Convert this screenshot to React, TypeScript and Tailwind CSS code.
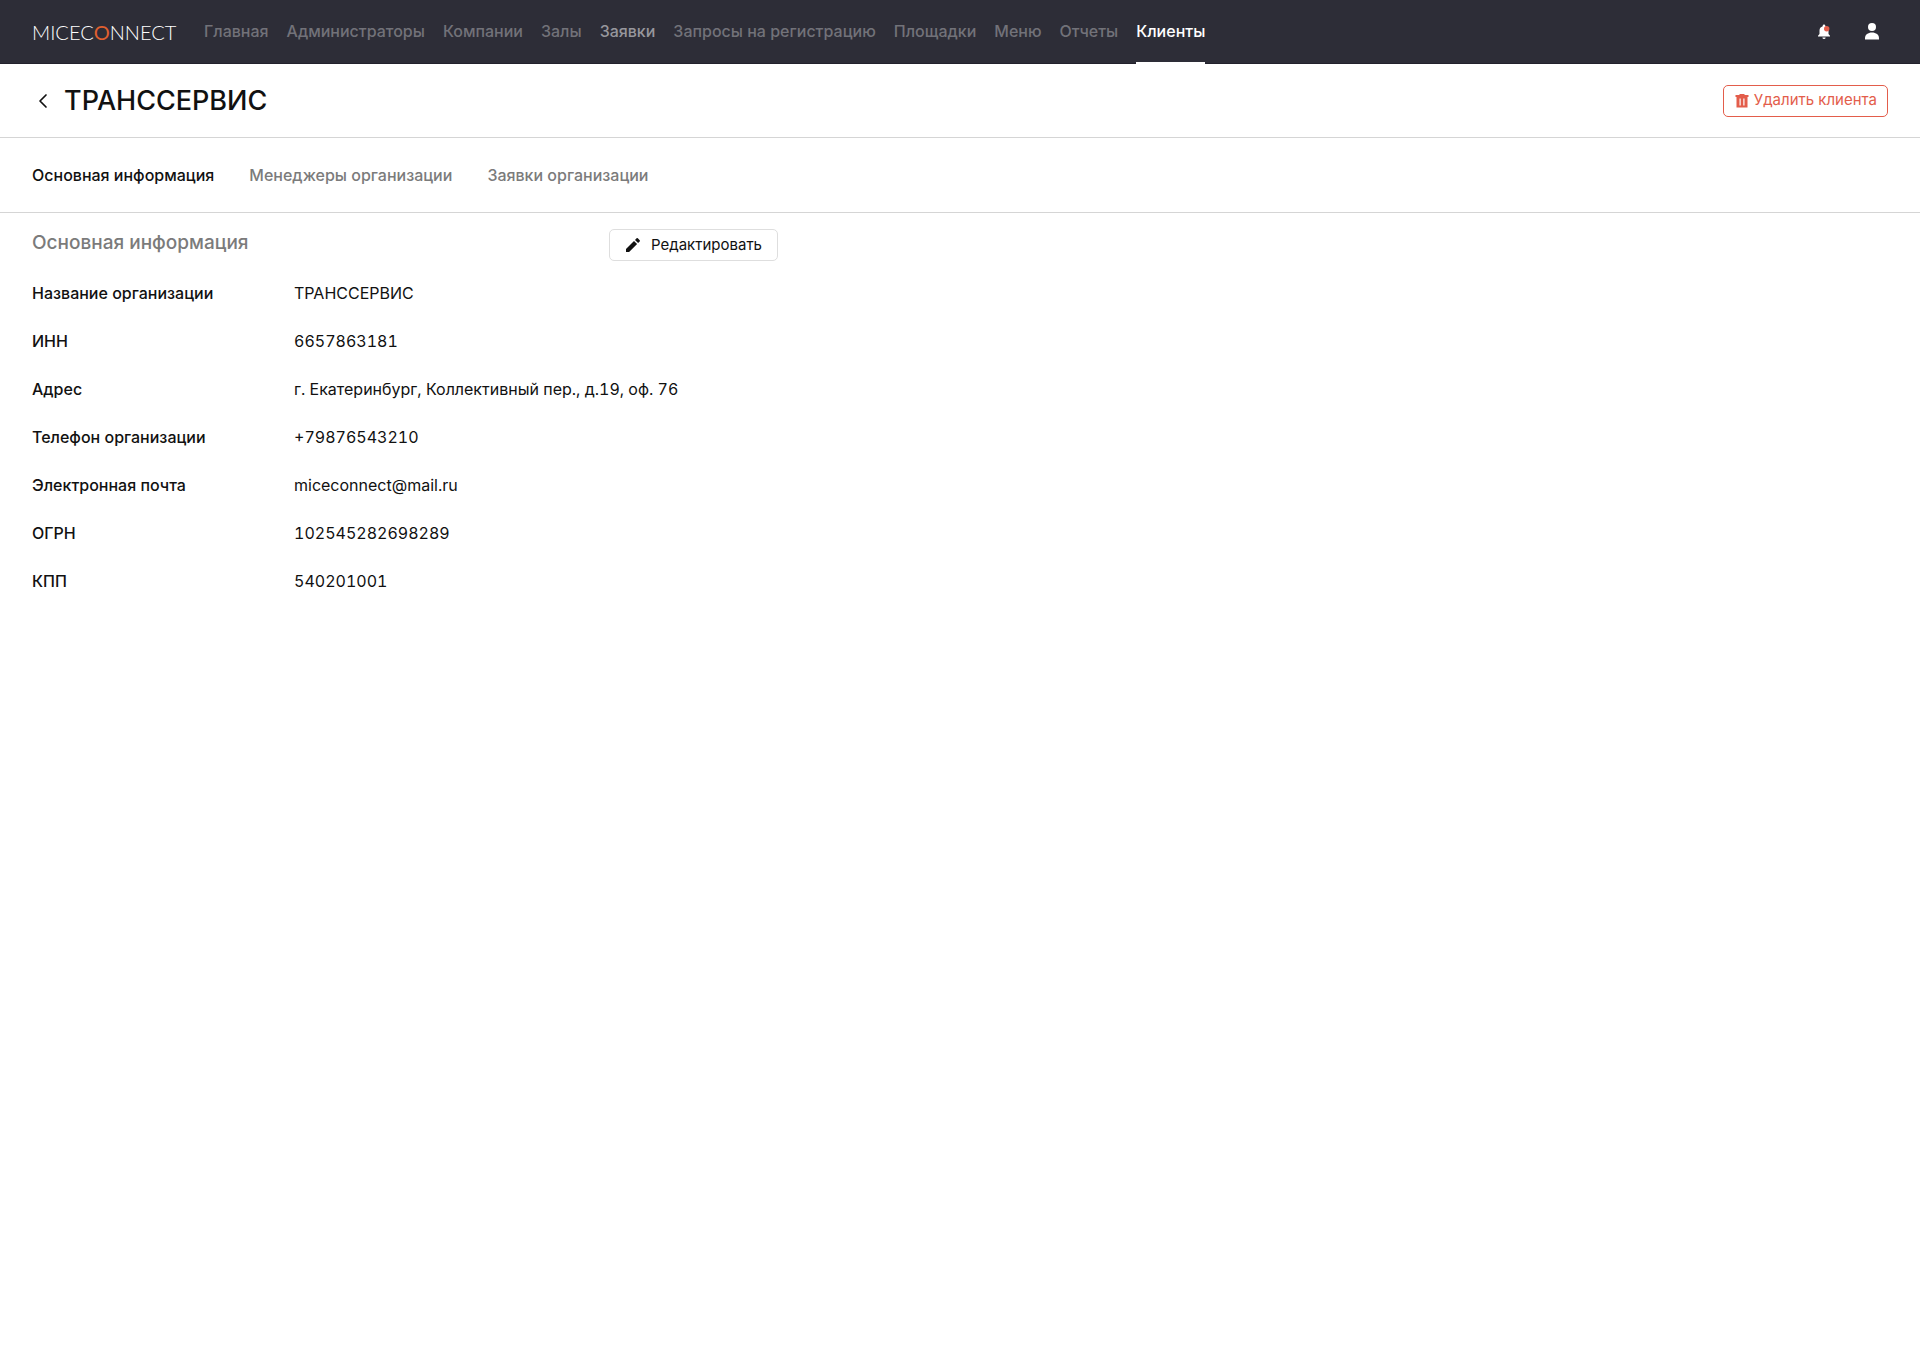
import React from "react";

const navItems = [
  "Главная",
  "Администраторы",
  "Компании",
  "Залы",
  "Заявки",
  "Запросы на регистрацию",
  "Площадки",
  "Меню",
  "Отчеты",
  "Клиенты",
];

const tabs = ["Основная информация", "Менеджеры организации", "Заявки организации"];

const details = [
  ["Название организации", "ТРАНССЕРВИС"],
  ["ИНН", "6657863181"],
  ["Адрес", "г. Екатеринбург, Коллективный пер., д.19, оф. 76"],
  ["Телефон организации", "+79876543210"],
  ["Электронная почта", "miceconnect@mail.ru"],
  ["ОГРН", "102545282698289"],
  ["КПП", "540201001"],
];

function navColor(item: string) {
  if (item === "Клиенты") return "border-white text-white";
  if (item === "Заявки") return "border-transparent text-[#97979d]";
  return "border-transparent text-[#727279]";
}

function Header() {
  return (
    <header className="flex h-16 items-center border-b border-[#22212c] bg-[#2d2d37] px-8">
      <a href="#" className="w-[140px] font-['Lato',sans-serif] text-[20px] leading-6 font-light whitespace-nowrap text-white">
        MICEC<span className="font-normal text-[#e0602f]">O</span>NNECT
      </a>
      <nav className="ml-8 flex gap-[18px] self-stretch">
        {navItems.map((item) => (
          <a
            key={item}
            href="#"
            className={`-mb-px flex items-center border-b-2 text-[16px] font-medium whitespace-nowrap ${navColor(item)}`}
          >
            {item}
          </a>
        ))}
      </nav>
      <div className="ml-auto flex items-center gap-5">
        <button type="button" aria-label="Уведомления" className="flex size-6 items-center justify-center">
          <svg viewBox="0 0 24 24" className="size-6">
            <path d="M12 4.500a1.300 1.300 0 0 1 1.300 1.300v.4c2 .6 3.200 2.300 3.200 4.300v3.600l1.500 1.700v.7H6v-.7l1.500-1.700v-3.600c0-2 1.200-3.700 3.200-4.300v-.4A1.300 1.300 0 0 1 12 4.500Z" fill="#fff" />
            <path d="M10.400 17.500h3.200a1.600 1.600 0 0 1-3.200 0Z" fill="#fff" />
            <circle cx="14.700" cy="8.700" r="2.700" fill="#e35d4b" />
          </svg>
        </button>
        <button type="button" aria-label="Профиль" className="flex size-8 items-center justify-center">
          <svg viewBox="0 0 24 24" className="size-6">
            <circle cx="12" cy="7" r="4" fill="#fff" />
            <path d="M5 19.500v-1.300C5 14.700 8 12.500 12 12.500s7 2.200 7 5.700V19.500Z" fill="#fff" />
          </svg>
        </button>
      </div>
    </header>
  );
}

export default function App() {
  return (
    <div className="min-h-screen bg-white font-['Inter',sans-serif] text-[#111111]">
      <Header />
      <section className="flex h-[74px] items-center justify-between border-b border-[#d5d5d5] px-8">
        <div className="flex items-center gap-2">
          <button type="button" aria-label="Назад" className="flex size-6 items-center justify-center">
            <svg viewBox="0 0 24 24" className="size-6" fill="none" stroke="#111" strokeWidth="1.7" strokeLinecap="round" strokeLinejoin="round">
              <path d="M14 6 8 12l6 6" />
            </svg>
          </button>
          <h1 className="text-[27px] leading-10 font-medium">ТРАНССЕРВИС</h1>
        </div>
        <button
          type="button"
          className="flex h-8 items-center gap-1 rounded-[5px] border border-[#e35d4b] px-2.5 text-[15px] text-[#e35d4b]"
        >
          <svg viewBox="0 0 16 16" className="size-4" fill="currentColor">
            <path fillRule="evenodd" d="M5.500 1h5V2H14.500V4h-1V14.500H2.500V4H1.500V2h4ZM5.500 5.500v7h1.200V5.500Zm3.800 0v7h1.200V5.500Z" />
          </svg>
          Удалить клиента
        </button>
      </section>
      <nav className="flex gap-[35px] border-b border-[#d5d5d5] px-8 py-6">
        {tabs.map((tab, i) => (
          <a key={tab} href="#" className={`text-[16px] leading-[26px] font-medium ${i === 0 ? "text-[#111111]" : "text-[#7b7b7b]"}`}>
            {tab}
          </a>
        ))}
      </nav>
      <main className="max-w-[810px] px-8 pt-4">
        <div className="flex items-start justify-between">
          <h2 className="text-[19px] leading-7 font-medium text-[#7b7b7b]">Основная информация</h2>
          <button type="button" className="flex h-8 items-center gap-2.5 rounded-[5px] border border-[#dedede] px-[15px] text-[15px]">
            <svg viewBox="0 0 16 16" className="size-4" fill="currentColor">
              <path d="M1 11.900V15h3.100l8-8L9 3.900ZM14.700 4.400a.9.9 0 0 0 0-1.200l-1.900-1.900a.9.9 0 0 0-1.200 0L10 2.900 13.100 6Z" />
            </svg>
            Редактировать
          </button>
        </div>
        <dl className="mt-2">
          {details.map(([label, value]) => (
            <div key={label} className="flex h-12 items-center text-[16px]">
              <dt className="w-[262px] shrink-0 font-medium">{label}</dt>
              <dd className="whitespace-nowrap tabular-nums">{value}</dd>
            </div>
          ))}
        </dl>
      </main>
    </div>
  );
}
